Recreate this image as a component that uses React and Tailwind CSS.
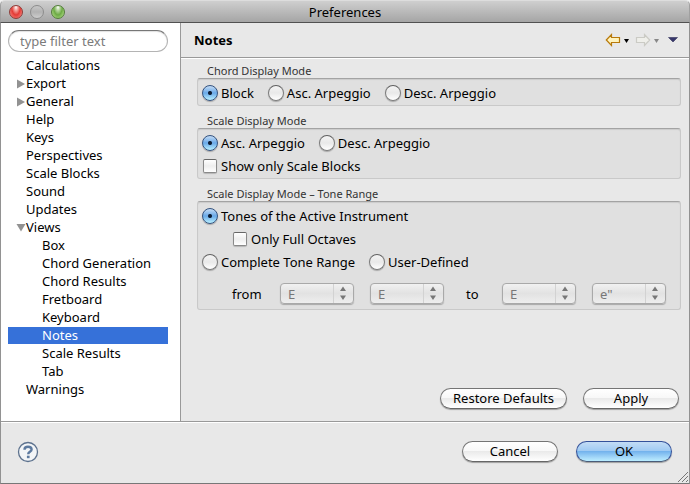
import React, { useState } from "react";

const RADIO =
  "m-0 size-4 shrink-0 appearance-none rounded-full border border-[#7b7b7b] border-t-[#5f5f5f] bg-linear-to-b from-[#f4f4f4] via-[#e9e9e9] to-white shadow-[0_1px_1px_#00000040] checked:border-[#34537f] checked:bg-[radial-gradient(circle_at_50%_50%,#0c1c33_0px,#0c1c33_1.5px,transparent_2.5px),linear-gradient(#c5dcf5,#69a9e8_50%,#b9f0ff)]";
const CHECK =
  "m-0 size-3.5 shrink-0 appearance-none rounded-xs border border-[#8a8a8a] border-t-[#666666] bg-linear-to-b from-white via-[#eeeeee] to-white shadow-[0_1px_1px_#00000030] checked:bg-[#69a9e8]";

function Radio({ label, ...props }) {
  return (
    <label className="flex h-[23px] items-center gap-[3px] whitespace-nowrap">
      <input type="radio" className={RADIO} {...props} />
      {label}
    </label>
  );
}

function Checkbox({ label }) {
  return (
    <label className="flex h-[23px] items-center gap-1 whitespace-nowrap pl-px">
      <input type="checkbox" className={CHECK} />
      {label}
    </label>
  );
}

function Group({ title, children }) {
  return (
    <fieldset className="min-w-0">
      <legend className="pl-2.5 text-[11px] leading-[15px] text-[#333333]">{title}</legend>
      <div className="rounded-[3px] border border-[#c9c9c9] border-t-[#a3a3a3] bg-[#e0e0e0] px-1 pt-0.5 pb-px shadow-[inset_0_1px_1px_#00000018]">
        {children}
      </div>
    </fieldset>
  );
}

function NoteSelect({ value, label }) {
  return (
    <div className="relative w-[74px] shrink-0">
      <select
        disabled
        aria-label={label}
        defaultValue={value}
        className="block h-[21px] w-full appearance-none rounded-sm border border-[#a9a9a9] bg-linear-to-b from-[#f1f1f1] via-[#e2e2e2] to-[#eeeeee] pl-[7px] text-[13px] leading-[18px] text-[#777777] opacity-100 shadow-[0_1px_1px_#00000040]"
      >
        <option>{value}</option>
      </select>
      <svg className="pointer-events-none absolute top-0 right-0" width="21" height="21" viewBox="0 0 21 21" aria-hidden="true">
        <path d="M0.5 1v19" stroke="#d2d2d2" />
        <path d="M7 8l3-4.5L13 8zM7 12.500l3 4.500 3-4.500z" fill="#777" />
      </svg>
    </div>
  );
}

function PushButton({ className, primary, children }) {
  const tone = primary
    ? "border-[#34519a] border-b-[#4a5c78] bg-[linear-gradient(#c3dcf5,#a1cbf3_45%,#74b3ed_50%,#a9dcfa_85%,#b9edff)]"
    : "border-[#757575] border-b-[#666666] bg-[linear-gradient(#ffffff,#f8f8f8_45%,#eaeaea_50%,#ffffff)]";
  return (
    <button
      type="button"
      className={`h-[21px] rounded-full border text-[13px] leading-[19px] shadow-[0_1px_1px_#00000050] ${tone} ${className}`}
    >
      {children}
    </button>
  );
}

const TREE = [
  { name: "Calculations" },
  { name: "Export", state: "closed" },
  { name: "General", state: "closed" },
  { name: "Help" },
  { name: "Keys" },
  { name: "Perspectives" },
  { name: "Scale Blocks" },
  { name: "Sound" },
  { name: "Updates" },
  { name: "Views", state: "open" },
  { name: "Box", child: true },
  { name: "Chord Generation", child: true },
  { name: "Chord Results", child: true },
  { name: "Fretboard", child: true },
  { name: "Keyboard", child: true },
  { name: "Notes", child: true },
  { name: "Scale Results", child: true },
  { name: "Tab", child: true },
  { name: "Warnings" },
];

function Tree() {
  const [selected, setSelected] = useState("Notes");
  return (
    <ul className="mt-[5px]">
      {TREE.map(({ name, state, child }) => (
        <li key={name} className="h-[18px]">
          <button
            type="button"
            onClick={() => setSelected(name)}
            className={`flex h-[17px] w-full items-center text-left leading-[17px] ${
              child ? "pl-[34px]" : "pl-2"
            } ${selected === name ? "bg-[#3671d9] text-white" : ""}`}
          >
            {!child && (
              <svg className="shrink-0" width="10" height="10" viewBox="0 0 10 10" fill="#929292" aria-hidden="true">
                {state === "closed" && <path d="M1 0.500v9L9 5z" />}
                {state === "open" && <path d="M0.500 1h9L5 8.500z" />}
              </svg>
            )}
            {name}
          </button>
        </li>
      ))}
    </ul>
  );
}

function TitleBar() {
  const light = "size-3.5 rounded-full border";
  return (
    <header className="grid h-[23px] grid-cols-[1fr_auto_1fr] items-center rounded-t-[5px] border border-[#a0a0a0] border-t-[#dddddd] border-b-[#515151] bg-linear-to-b from-[#cfcfcf] to-[#a5a5a5] px-2">
      <div className="flex items-center gap-[7px]">
        <button type="button" aria-label="Close" className={`${light} border-[#8d3c38] bg-[radial-gradient(ellipse_at_50%_10%,#ffffff_0%,#f4a29d_22%,#e33b36_50%,#ff9791_100%)]`} />
        <button type="button" aria-label="Minimize" disabled className={`${light} border-[#8c8c8c] bg-linear-to-b from-[#c8c8c8] via-[#b2b2b2] to-[#cecece]`} />
        <button type="button" aria-label="Zoom" className={`${light} border-[#547d3c] bg-[radial-gradient(ellipse_at_50%_10%,#ffffff_0%,#b7d6a0_22%,#6daa45_50%,#c5ee99_100%)]`} />
      </div>
      <h1 className="text-[13px] leading-5">Preferences</h1>
    </header>
  );
}

function Arrow({ forward }) {
  return (
    <svg width="24" height="14" viewBox="0 0 24 14" aria-hidden="true">
      <g transform={forward ? "translate(16 0) scale(-1 1)" : undefined}>
        <path
          d="M1.300 7L6.500 1.500V4.500H14.500V9.500H6.500V12.500Z"
          fill={forward ? "#efefea" : "#fff3bd"}
          stroke={forward ? "#cbcbc5" : "#b87a0b"}
          strokeWidth="1.2"
        />
      </g>
      <path d="M19 6h5l-2.500 4z" fill={forward ? "#888888" : "#000000"} />
    </svg>
  );
}

export default function App() {
  return (
    <main className="flex min-h-screen flex-col bg-[#f2f2f2] font-['Noto_Sans','Open_Sans',sans-serif] text-[13px] leading-[18px] text-black">
      <TitleBar />
      <div className="flex flex-1 flex-col border-x border-b border-[#929292] border-b-[#777777] bg-[#e8e8e8]">
        <div className="flex flex-1">
          <nav aria-label="Preference pages" className="w-[180px] shrink-0 border-r border-[#999999] bg-white pt-[7px] pr-3 pl-[7px]">
            <input
              type="text"
              aria-label="Filter"
              placeholder="type filter text"
              className="block h-[22px] w-full rounded-full border border-[#b4b4b4] border-t-[#777777] bg-white pr-3 pl-[11px] text-[13px] shadow-[inset_0_1px_1px_#00000020] placeholder:text-[#7b7b7b]"
            />
            <Tree />
          </nav>
          <section className="flex min-w-0 flex-1 flex-col">
            <div className="flex h-[35px] items-center justify-between border-b border-[#999999] pr-[11px] pl-[13px] shadow-[0_1px_0_white]">
              <h2 className="font-bold">Notes</h2>
              <div className="flex items-center gap-[6px]">
                <button type="button" aria-label="Back"><Arrow /></button>
                <button type="button" aria-label="Forward" disabled><Arrow forward /></button>
                <button type="button" aria-label="Menu" className="pl-[3px]">
                  <svg width="10" height="6" viewBox="0 0 10 6" aria-hidden="true">
                    <path d="M0.500 0.500h9L5 5z" fill="#37376b" stroke="#30305a" strokeWidth="0.6" />
                  </svg>
                </button>
              </div>
            </div>
            <form className="flex flex-1 flex-col gap-[7px] pt-[5px] pr-2 pb-3 pl-4">
              <Group title="Chord Display Mode">
                <div className="flex gap-3.5">
                  <Radio name="chord" label="Block" defaultChecked />
                  <Radio name="chord" label="Asc. Arpeggio" />
                  <Radio name="chord" label="Desc. Arpeggio" />
                </div>
              </Group>
              <Group title="Scale Display Mode">
                <div className="flex gap-3.5">
                  <Radio name="scale" label="Asc. Arpeggio" defaultChecked />
                  <Radio name="scale" label="Desc. Arpeggio" />
                </div>
                <Checkbox label="Show only Scale Blocks" />
              </Group>
              <Group title="Scale Display Mode – Tone Range">
                <Radio name="range" label="Tones of the Active Instrument" defaultChecked />
                <div className="pl-[30px]">
                  <Checkbox label="Only Full Octaves" />
                </div>
                <div className="flex gap-3.5">
                  <Radio name="range" label="Complete Tone Range" />
                  <Radio name="range" label="User-Defined" />
                </div>
                <div className="flex items-center pt-2.5 pb-1 pl-[30px]">
                  <span className="w-12">from</span>
                  <div className="flex gap-4">
                    <NoteSelect value="E" label="From note" />
                    <NoteSelect value="E" label="From octave" />
                  </div>
                  <span className="w-[58px] pl-[22px]">to</span>
                  <div className="flex gap-4">
                    <NoteSelect value="E" label="To note" />
                    <NoteSelect value={'e"'} label="To octave" />
                  </div>
                </div>
              </Group>
              <div className="mt-auto flex justify-end gap-4 pr-0.5">
                <PushButton className="w-[127px]">Restore Defaults</PushButton>
                <PushButton className="w-24">Apply</PushButton>
              </div>
            </form>
          </section>
        </div>
        <footer className="relative flex h-[62px] items-center justify-between border-t border-[#999999] pr-[17px] pb-0.5 pl-4 shadow-[inset_0_1px_0_white]">
          <button type="button" aria-label="Help">
            <svg width="22" height="22" viewBox="0 0 22 22" fill="none" aria-hidden="true">
              <circle cx="11" cy="11" r="9.500" fill="#f3f5f7" stroke="#5d728e" strokeWidth="1.300" />
              <path d="M7.500 8.700C7.500 6.700 9 5.700 11 5.700s3.600 1 3.600 2.800c0 2.300-3.400 2.300-3.400 4.700" stroke="#5d7a9f" strokeWidth="2.400" />
              <path d="M9.900 14.700h2.700v2.500H9.900z" fill="#5d7a9f" />
            </svg>
          </button>
          <div className="flex gap-[18px]">
            <PushButton className="w-24">Cancel</PushButton>
            <PushButton primary className="w-24">OK</PushButton>
          </div>
          <svg className="absolute right-0 bottom-0" width="12" height="12" viewBox="0 0 12 12" aria-hidden="true">
            <path d="M1 11L11 1M5 11l6-6M9 11l2-2" stroke="#777777" />
          </svg>
        </footer>
      </div>
    </main>
  );
}
